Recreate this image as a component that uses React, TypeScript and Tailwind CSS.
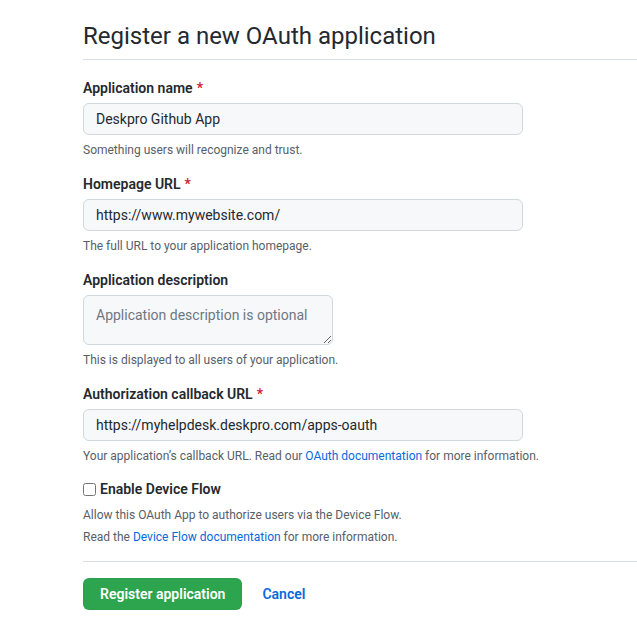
const font = { fontFamily: '"Segoe UI", Roboto, "Noto Sans", sans-serif' }

function Label({ children, required }: { children: React.ReactNode; required?: boolean }) {
  return (
    <label className="block text-sm font-semibold leading-5 text-[#24292f]">
      {children}
      {required && <span className="ml-1 text-[#cf222e]">*</span>}
    </label>
  )
}

function Note({ children }: { children: React.ReactNode }) {
  return <p className="mt-[6px] text-xs leading-[18px] text-[#57606a]">{children}</p>
}

function TextInput({ value }: { value: string }) {
  return (
    <input
      readOnly
      value={value}
      className="mt-[5px] block h-8 w-[440px] rounded-md border border-[#d0d7de] bg-[#f6f8fa] px-3 text-sm text-[#24292f] outline-none"
    />
  )
}

export default function App() {
  return (
    <div className="min-h-[642px] bg-white pl-[83px] pt-[21px]" style={font}>
      <h2 className="pb-2 text-2xl font-normal leading-[30px] text-[#24292f]">Register a new OAuth application</h2>
      <div className="h-px bg-[#d8dee4]" />

      <div className="pt-[18px]">
        <Label required>Application name</Label>
        <TextInput value="Deskpro Github App" />
        <Note>Something users will recognize and trust.</Note>
      </div>

      <div className="pt-[15px]">
        <Label required>Homepage URL</Label>
        <TextInput value="https://www.mywebsite.com/" />
        <Note>The full URL to your application homepage.</Note>
      </div>

      <div className="pt-[15px]">
        <Label>Application description</Label>
        <textarea
          readOnly
          placeholder="Application description is optional"
          className="mt-[5px] block h-[50px] w-[250px] resize-y rounded-md border border-[#d0d7de] bg-[#f6f8fa] px-3 py-[9px] text-sm leading-5 text-[#24292f] outline-none placeholder:text-[#6e7781]"
        />
        <Note>This is displayed to all users of your application.</Note>
      </div>

      <div className="pt-[15px]">
        <Label required>Authorization callback URL</Label>
        <TextInput value="https://myhelpdesk.deskpro.com/apps-oauth" />
        <Note>
          Your application’s callback URL. Read our <a className="text-[#0969da]">OAuth documentation</a> for more
          information.
        </Note>
      </div>

      <div className="pt-[14px]">
        <label className="flex items-center gap-1 text-sm font-semibold leading-5 text-[#24292f]">
          <input type="checkbox" className="m-0 h-[13px] w-[13px]" />
          Enable Device Flow
        </label>
        <p className="mt-[7px] text-xs leading-[18px] text-[#57606a]">
          Allow this OAuth App to authorize users via the Device Flow.
        </p>
        <p className="mt-[4px] text-xs leading-[18px] text-[#57606a]">
          Read the <a className="text-[#0969da]">Device Flow documentation</a> for more information.
        </p>
      </div>

      <div className="mt-[15px] h-px bg-[#d8dee4]" />

      <div className="flex items-center gap-5 pt-4">
        <button className="h-8 rounded-md border border-[#1f883d26] bg-[#2da44e] px-4 text-sm font-semibold text-white">
          Register application
        </button>
        <a className="text-sm font-semibold text-[#0969da]">Cancel</a>
      </div>
    </div>
  )
}
